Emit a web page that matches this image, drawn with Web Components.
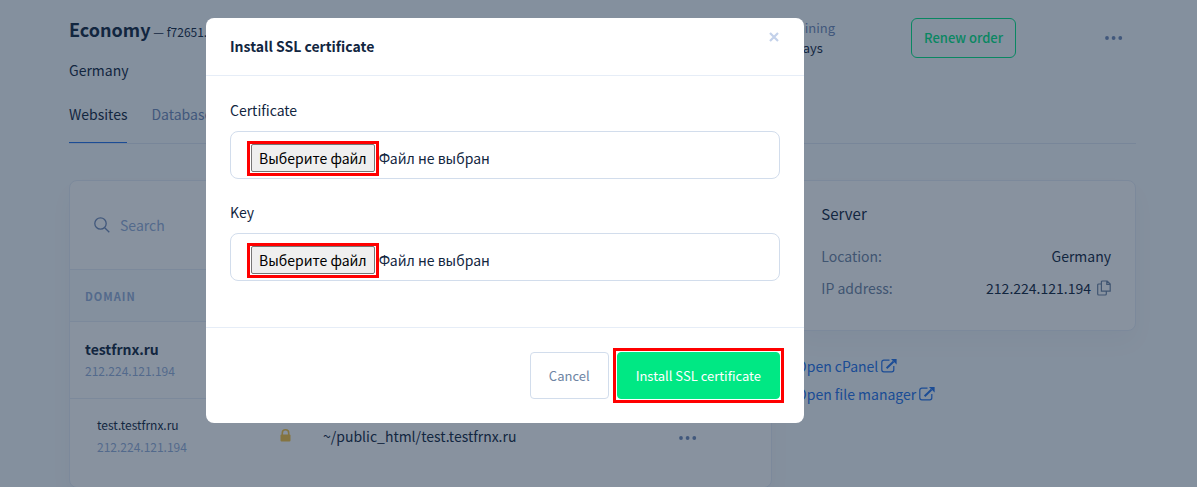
<!DOCTYPE html>
<html lang="en">
<head>
<meta charset="utf-8">
<meta name="viewport" content="width=device-width, initial-scale=1">
<title>Hosting – Install SSL certificate</title>
<style>
    :root {
        --ink: #12263f;
        --muted: #718ab8;
        --grey: #6e84a3;
        --soft: #95aed8;
        --line: #e6edf7;
        --field-line: #d2ddec;
        --primary: #2472ea;
        --success: #00e884;
    }

    * {
        box-sizing: border-box;
    }

    body {
        margin: 0;
        overflow: hidden;
        background: #f7fafc;
        color: var(--ink);
        font: 14px/22px "Noto Sans CJK SC", "Noto Sans", sans-serif;
    }
</style>
</head>
<body>
<hosting-page></hosting-page>
<modal-dialog heading="Install SSL certificate">
    <file-field label="Certificate"></file-field>
    <file-field label="Key"></file-field>
    <app-button slot="footer" variant="plain">Cancel</app-button>
    <focus-frame slot="footer"><app-button variant="solid">Install SSL certificate</app-button></focus-frame>
</modal-dialog>

<script>
const icons = {
    search: '<svg width="16" height="16" viewBox="0 0 16 16" fill="none" stroke="currentColor" stroke-width="1.3"><circle cx="6.5" cy="6.5" r="5.7"/><path d="M10.7 10.7l4.6 4.6"/></svg>',
    lock: '<svg width="11" height="13" viewBox="0 0 11 13"><path d="M2.3 6V4a3.2 3.2 0 0 1 6.4 0v2" fill="none" stroke="currentColor" stroke-width="1.6"/><rect x=".5" y="5.4" width="10" height="7.2" rx="1" fill="currentColor"/></svg>',
    copy: '<svg width="14" height="16" viewBox="0 0 14 16" fill="none" stroke="currentColor" stroke-width="1.2"><path d="M5.4 1h4.8l3 3v7.2H4.4V2a1 1 0 0 1 1-1zM9.8 1v3.4h3.4M4.4 4H1.7a1 1 0 0 0-1 1v9a1 1 0 0 0 1 1h6.6a1 1 0 0 0 1-1v-2.8"/></svg>',
    external: '<svg width="16" height="14" viewBox="0 0 16 14"><path d="M8.5 1.2H2.8a2 2 0 0 0-2 2v7.6a2 2 0 0 0 2 2h8a2 2 0 0 0 2-2V7" fill="none" stroke="currentColor" stroke-width="1.2"/><path d="M5.6 9.2l7-6.6" fill="none" stroke="currentColor" stroke-width="2"/><path d="M10 0h5.6v5.4z" fill="currentColor"/></svg>',
    dots: '<svg width="18" height="4" viewBox="0 0 18 4" fill="currentColor"><circle cx="2" cy="2" r="1.9"/><circle cx="8.6" cy="2" r="1.9"/><circle cx="15.3" cy="2" r="1.9"/></svg>',
    close: '<svg width="11" height="10" viewBox="0 0 11 10" fill="none" stroke="currentColor" stroke-width="2.2"><path d="M1 1l8 8M9 1L1 9"/></svg>'
};

// Shared reset, shadow roots do not see the page rules
const base = `
    *, *::before, *::after { box-sizing: border-box; }
    h1, h2, p, dl, dd { margin: 0; font-size: inherit; }
    button, input { font: inherit; }
`;

class BaseElement extends HTMLElement {
    constructor() {
        super();
        this.attachShadow({ mode: 'open' });
    }

    connectedCallback() {
        this.shadowRoot.innerHTML = `<style>${base}${this.styles()}</style>${this.template()}`;
    }
}

class AppIcon extends BaseElement {
    styles() {
        return ':host { display: inline-flex; } svg { display: block; }';
    }

    template() {
        return icons[this.getAttribute('name')];
    }
}

class IconButton extends BaseElement {
    styles() {
        return `
            :host { display: inline-flex; vertical-align: middle; }
            button { display: flex; padding: 0; border: 0; background: none; color: inherit; cursor: pointer; }
        `;
    }

    template() {
        return `<button type="button" aria-label="${this.getAttribute('label')}"><app-icon name="${this.getAttribute('name')}"></app-icon></button>`;
    }
}

class AppButton extends BaseElement {
    styles() {
        return `
            :host { display: inline-flex; }
            button {
                height: 47px;
                padding: 0 18px;
                border: 1px solid var(--field-line);
                border-radius: 4px;
                background: #fff;
                color: var(--grey);
                font-size: 13px;
                cursor: pointer;
            }
            :host([variant="solid"]) button {
                border-color: var(--success);
                background: var(--success);
                color: #fff;
            }
            :host([variant="outline"]) button {
                height: 40px;
                padding: 0 12px;
                border-color: var(--success);
                border-radius: 6px;
                background: none;
                color: var(--success);
                font-weight: 500;
            }
        `;
    }

    template() {
        return '<button type="button"><slot></slot></button>';
    }
}

// Red frame drawn over the edge of whatever is slotted in
class FocusFrame extends BaseElement {
    styles() {
        return `
            :host { position: relative; display: inline-flex; }
            :host::after {
                content: "";
                position: absolute;
                inset: var(--frame-inset, -4px);
                border: 3px solid #f00;
                pointer-events: none;
            }
        `;
    }

    template() {
        return '<slot></slot>';
    }
}

class FileField extends BaseElement {
    styles() {
        return `
            :host { display: block; margin-bottom: 22px; }
            label { display: block; margin-bottom: 10px; }
            .field {
                position: relative;
                display: flex;
                align-items: center;
                gap: 4px;
                height: 48px;
                padding: 6px 20px 0;
                border: 1px solid var(--field-line);
                border-radius: 8px;
            }
            input { position: absolute; inset: 0; width: 100%; opacity: 0; cursor: pointer; }
            focus-frame { --frame-inset: -3px -4px -4px; }
            .choose {
                padding: 2px 7px;
                border: 1px solid #767676;
                border-radius: 2px;
                background: #efefef;
                color: #000;
            }
        `;
    }

    template() {
        return `
            <label for="file">${this.getAttribute('label')}</label>
            <div class="field">
                <focus-frame><span class="choose">Выберите файл</span></focus-frame>
                <span class="name">Файл не выбран</span>
                <input id="file" type="file">
            </div>
        `;
    }

    connectedCallback() {
        super.connectedCallback();
        const input = this.shadowRoot.querySelector('input');
        input.addEventListener('change', () => {
            const file = input.files[0];
            this.shadowRoot.querySelector('.name').textContent = file ? file.name : 'Файл не выбран';
        });
    }
}

class ModalDialog extends BaseElement {
    styles() {
        return `
            :host {
                position: fixed;
                inset: 0;
                display: flex;
                justify-content: center;
                align-items: flex-start;
                padding: 18px 187px 18px 0;
                background: rgba(18, 38, 63, .5);
            }
            :host([hidden]) { display: none; }
            .dialog { width: 100%; max-width: 598px; border-radius: 8px; background: #fff; }
            header {
                display: flex;
                align-items: flex-start;
                justify-content: space-between;
                padding: 14px 24px 18px;
                border-bottom: 1px solid var(--line);
            }
            h2 { padding-top: 3px; font-weight: 700; }
            icon-button { color: #c3d1ea; }
            .body { padding: 23px 24px 24px; }
            footer {
                display: flex;
                justify-content: flex-end;
                gap: 8px;
                padding: 24px;
                border-top: 1px solid var(--line);
            }
        `;
    }

    template() {
        return `
            <section class="dialog" role="dialog" aria-modal="true" aria-labelledby="title">
                <header>
                    <h2 id="title">${this.getAttribute('heading')}</h2>
                    <icon-button name="close" label="Close"></icon-button>
                </header>
                <div class="body"><slot></slot></div>
                <footer><slot name="footer"></slot></footer>
            </section>
        `;
    }

    connectedCallback() {
        super.connectedCallback();
        this.shadowRoot.querySelector('icon-button').addEventListener('click', () => {
            this.hidden = true;
        });
    }
}

class OrderHeader extends BaseElement {
    styles() {
        return `
            :host { display: block; }
            .top { display: flex; align-items: flex-start; padding-top: 18px; }
            .name { flex: 1; }
            h1 { font-size: 12px; font-weight: 400; line-height: 22px; }
            h1 b { font-size: 18px; }
            .name p { margin-top: 16px; }
            .remaining { width: 141px; font-size: 13px; line-height: 20px; }
            .remaining dt { color: var(--muted); }
            .more { width: 120px; height: 40px; display: flex; align-items: center; justify-content: flex-end; padding-right: 13px; color: var(--muted); }
            nav { display: flex; gap: 24px; margin-top: 22px; border-bottom: 1px solid #dfe7f3; }
            nav a { height: 40px; color: var(--muted); text-decoration: none; }
            nav a[aria-current] { border-bottom: 1px solid var(--primary); color: var(--ink); }
        `;
    }

    template() {
        return `
            <div class="top">
                <div class="name">
                    <h1><b>Economy</b> — f72651.</h1>
                    <p>Germany</p>
                </div>
                <dl class="remaining">
                    <dt>Remaining</dt>
                    <dd>364 days</dd>
                </dl>
                <app-button variant="outline">Renew order</app-button>
                <div class="more"><icon-button name="dots" label="More"></icon-button></div>
            </div>
            <nav>
                <a href="#websites" aria-current="page">Websites</a>
                <a href="#databases">Databases</a>
            </nav>
        `;
    }
}

class PanelCard extends BaseElement {
    styles() {
        return `
            :host {
                display: block;
                border: 1px solid var(--line);
                border-radius: 8px;
                background: #fff;
                box-shadow: 0 12px 24px rgba(18, 38, 63, .03);
            }
        `;
    }

    template() {
        return '<slot></slot>';
    }
}

class DomainList extends BaseElement {
    styles() {
        return `
            :host { display: block; }
            .search { display: flex; align-items: center; gap: 10px; height: 88px; padding: 0 24px; color: var(--soft); }
            .search app-icon { color: var(--muted); }
            input { flex: 1; padding: 0; border: 0; outline: 0; background: none; color: var(--ink); }
            input::placeholder { color: var(--soft); opacity: 1; }
            table { width: 100%; table-layout: fixed; border-collapse: collapse; text-align: left; }
            th {
                height: 52px;
                padding: 0 15px;
                border-top: 1px solid var(--line);
                background: #f7fafc;
                color: var(--soft);
                font-size: 11px;
                font-weight: 700;
                letter-spacing: 1px;
                text-transform: uppercase;
            }
            td { height: 77px; padding: 0 0 0 12px; border-top: 1px solid var(--line); }
            td:first-child { padding-left: 15px; }
            .sub td { height: 88px; padding-bottom: 14px; }
            .sub td:first-child { padding-left: 27px; }
            .sub p { font-size: 12px; }
            .domain { font-weight: 700; }
            .sub .domain { font-weight: 400; }
            td .ip { color: var(--soft); font-size: 12px; }
            .lock { color: #f6c343; }
            .more { color: var(--muted); }
            .col-domain { width: 198px; }
            .col-lock { width: 43px; }
            .col-more { width: 104px; }
        `;
    }

    template() {
        return `
            <panel-card>
                <div class="search">
                    <app-icon name="search"></app-icon>
                    <input type="search" placeholder="Search" aria-label="Search">
                </div>
                <table>
                    <colgroup><col class="col-domain"><col class="col-lock"><col><col class="col-more"></colgroup>
                    <thead>
                        <tr><th scope="col">Domain</th><th></th><th></th><th></th></tr>
                    </thead>
                    <tbody>
                        <tr>
                            <td><p class="domain">testfrnx.ru</p><p class="ip">212.224.121.194</p></td>
                            <td></td><td></td><td></td>
                        </tr>
                        <tr class="sub">
                            <td><p class="domain">test.testfrnx.ru</p><p class="ip">212.224.121.194</p></td>
                            <td class="lock"><app-icon name="lock"></app-icon></td>
                            <td>~/public_html/test.testfrnx.ru</td>
                            <td class="more"><icon-button name="dots" label="More"></icon-button></td>
                        </tr>
                    </tbody>
                </table>
            </panel-card>
        `;
    }
}

class ServerInfo extends BaseElement {
    styles() {
        return `
            :host { display: block; }
            .info { padding: 22px 24px 26px; }
            h2 { margin-bottom: 15px; font-size: 15px; font-weight: 400; line-height: 22px; }
            dl { display: grid; grid-template-columns: auto 1fr; line-height: 32px; margin: 0; }
            dt { color: var(--grey); }
            dd { display: flex; justify-content: flex-end; align-items: center; gap: 6px; }
            icon-button { color: var(--grey); }
            .links { display: grid; justify-items: start; gap: 6px; margin-top: 24px; }
            .links a { display: flex; align-items: center; gap: 3px; color: var(--primary); text-decoration: none; }
        `;
    }

    template() {
        return `
            <panel-card>
                <div class="info">
                    <h2>Server</h2>
                    <dl>
                        <dt>Location:</dt><dd>Germany</dd>
                        <dt>IP address:</dt><dd>212.224.121.194 <icon-button name="copy" label="Copy"></icon-button></dd>
                    </dl>
                </div>
            </panel-card>
            <div class="links">
                <a href="#cpanel">Open cPanel <app-icon name="external"></app-icon></a>
                <a href="#files">Open file manager <app-icon name="external"></app-icon></a>
            </div>
        `;
    }
}

class HostingPage extends BaseElement {
    styles() {
        return `
            :host { display: block; padding: 0 61px 0 69px; }
            main {
                display: grid;
                grid-template-columns: calc((100% + 24px) * 2 / 3 - 24px) 1fr;
                align-items: start;
                gap: 24px;
                margin-top: 36px;
            }
        `;
    }

    template() {
        return `
            <order-header></order-header>
            <main>
                <domain-list></domain-list>
                <server-info></server-info>
            </main>
        `;
    }
}

customElements.define('app-icon', AppIcon);
customElements.define('icon-button', IconButton);
customElements.define('app-button', AppButton);
customElements.define('focus-frame', FocusFrame);
customElements.define('file-field', FileField);
customElements.define('modal-dialog', ModalDialog);
customElements.define('order-header', OrderHeader);
customElements.define('panel-card', PanelCard);
customElements.define('domain-list', DomainList);
customElements.define('server-info', ServerInfo);
customElements.define('hosting-page', HostingPage);
</script>
</body>
</html>
